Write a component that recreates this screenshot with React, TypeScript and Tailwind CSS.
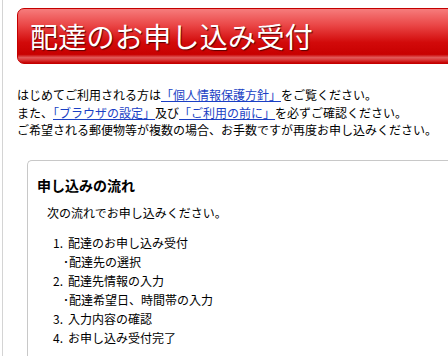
import React from "react";

const font = { fontFamily: '"Noto Sans CJK JP", "Noto Sans", sans-serif' };

export default function App() {
  return (
    <div className="w-[448px] h-[356px] overflow-hidden bg-white text-black" style={font}>
      <div className="ml-[2px] h-[356px] border-l border-[#d4d4d4] pl-[14px] pt-[8px] w-[500px]">
        <div className="h-[56px] rounded-l-[7px] border border-[#c40000] bg-[linear-gradient(to_bottom,#f67c7c_0%,#ea4646_30%,#d20a0a_62%,#c80000_84%,#e25a5a_90%,#d83030_95%,#c40000_100%)] flex items-center pl-[12px]">
          <h1 className="text-[28px] leading-none text-white tracking-[0.3px] [text-shadow:1px_1px_1px_#5a0000]">
            配達のお申し込み受付
          </h1>
        </div>

        <div className="mt-[22px] text-[12px] leading-[17.5px]">
          <p>
            はじめてご利用される方は
            <a className="text-[#1a3fc4] underline" href="#">「個人情報保護方針」</a>
            をご覧ください。
          </p>
          <p>
            また、<a className="text-[#1a3fc4] underline" href="#">「ブラウザの設定」</a>及び
            <a className="text-[#1a3fc4] underline" href="#">「ご利用の前に」</a>を必ずご確認ください。
          </p>
          <p>ご希望される郵便物等が複数の場合、お手数ですが再度お申し込みください。</p>
        </div>

        <div className="ml-[10px] mt-[21px] h-[220px] rounded-tl-[5px] border-l border-t border-[#c8c8c8] pl-[9px] pt-[14px]">
          <h2 className="text-[14px] font-bold leading-[20px]">申し込みの流れ</h2>
          <p className="mt-[8px] ml-[10px] text-[12px] leading-[19px]">次の流れでお申し込みください。</p>
          <ol className="mt-[11px] ml-[16px] text-[12px] leading-[19px]">
            <li className="flex"><span className="w-[15px]">1.</span><span>配達のお申し込み受付</span></li>
            <li className="pl-[10px]">･配達先の選択</li>
            <li className="flex"><span className="w-[15px]">2.</span><span>配達先情報の入力</span></li>
            <li className="pl-[10px]">･配達希望日、時間帯の入力</li>
            <li className="flex"><span className="w-[15px]">3.</span><span>入力内容の確認</span></li>
            <li className="flex"><span className="w-[15px]">4.</span><span>お申し込み受付完了</span></li>
          </ol>
        </div>
      </div>
    </div>
  );
}
